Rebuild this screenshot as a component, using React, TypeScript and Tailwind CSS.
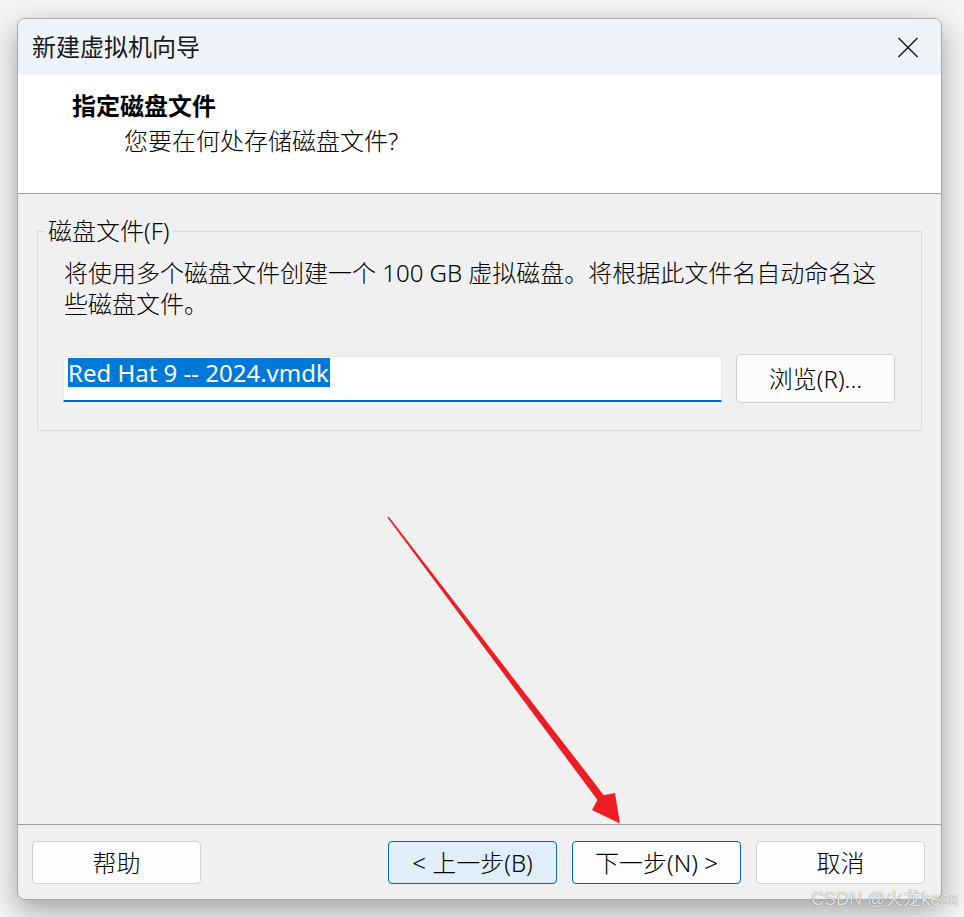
import React from "react";

function CloseIcon() {
  return (
    <svg width="22" height="21" viewBox="0 0 22 21" fill="none">
      <path d="M1.5 1 L20.5 20 M20.5 1 L1.5 20" stroke="#1b1b1b" strokeWidth="1.5" />
    </svg>
  );
}

function Button({ label, variant }: { label: string; variant: "plain" | "hover" | "default" }) {
  const cls =
    variant === "hover"
      ? "bg-[#e0eef9] border-[#0067c0]"
      : variant === "default"
      ? "bg-[#fdfdfd] border-[#0067c0]"
      : "bg-[#fdfdfd] border-[#d0d0d0]";
  return (
    <div
      className={`w-[169px] h-[43px] rounded-[4px] border flex items-center justify-center text-[24px] leading-none font-light text-black ${cls}`}
    >
      {label}
    </div>
  );
}

export default function App() {
  return (
    <div className="relative w-[964px] h-[917px] overflow-hidden bg-[#f4f4f4] pt-[18px] pl-[17px] font-['Noto_Sans','Noto_Sans_CJK_SC',sans-serif] text-black">
      <div className="w-[925px] h-[882px] rounded-[8px] border border-[#a9a9a9] overflow-hidden flex flex-col bg-[#f0f0f0] shadow-[0_10px_28px_rgba(0,0,0,0.35)]">
        {/* Title bar */}
        <div className="h-[56px] shrink-0 bg-[#eef2f9] flex items-center justify-between pl-[14px] pr-[22px]">
          <span className="text-[24px] leading-none text-[#1a1a1a]">新建虚拟机向导</span>
          <CloseIcon />
        </div>
        {/* Header */}
        <div className="h-[119px] shrink-0 bg-white border-b border-[#a0a0a0] pl-[54px] pt-[15px]">
          <div className="text-[24px] leading-[32px] font-semibold">指定磁盘文件</div>
          <div className="text-[24px] leading-[32px] mt-[3px] pl-[52px] font-light">您要在何处存储磁盘文件?</div>
        </div>
        {/* Body */}
        <div className="h-[631px] shrink-0 border-b border-[#a0a0a0] px-[19px] pt-[37px]">
          <div className="relative h-[200px] border border-[#dadada]">
            <div className="absolute left-[7px] top-[-17px] px-[3px] bg-[#f0f0f0] text-[24px] leading-[32px] font-light">
              磁盘文件(F)
            </div>
            <div className="pl-[26px] pt-[25px] text-[24px] leading-[31px] font-light">
              <div>将使用多个磁盘文件创建一个 100 GB 虚拟磁盘。将根据此文件名自动命名这</div>
              <div>些磁盘文件。</div>
            </div>
            <div className="flex items-center pl-[25px] mt-[35px] gap-[14px]">
              <div className="w-[659px] h-[46px] bg-white border border-[#e6e6e6] border-b-2 border-b-[#0067c0] pt-[1px] pl-[4px]">
                <span className="inline-block bg-[#0078d7] text-white text-[24px] leading-[29px] pr-[1px]">
                  Red Hat 9 -- 2024.vmdk
                </span>
              </div>
              <div className="w-[159px] h-[49px] rounded-[4px] border border-[#d0d0d0] bg-[#fcfcfc] flex items-center justify-center text-[24px] leading-none font-light">
                浏览(R)...
              </div>
            </div>
          </div>
        </div>
        {/* Footer */}
        <div className="flex-1 flex items-start justify-between pl-[14px] pr-[16px] pt-[16px]">
          <Button label="帮助" variant="plain" />
          <div className="flex gap-[15px]">
            <Button label="< 上一步(B)" variant="hover" />
            <Button label="下一步(N) >" variant="default" />
            <Button label="取消" variant="plain" />
          </div>
        </div>
      </div>

      {/* Red annotation arrow */}
      <svg className="absolute left-0 top-0 pointer-events-none" width="964" height="917" viewBox="0 0 964 917">
        <polygon
          points="387.4,517.5 597.5,800 592,810 620,823.5 615,793 603.8,795.2 388.6,516.5"
          fill="#ee1c25"
        />
      </svg>

      {/* Watermark */}
      <div className="absolute left-[811px] top-[888px] whitespace-nowrap text-[18px] leading-[22px] text-[rgba(255,255,255,0.85)] [text-shadow:0_0_1px_rgba(0,0,0,0.6)] font-['Liberation_Sans','Noto_Sans_CJK_SC',sans-serif]">
        CSDN @火龙kess
      </div>
    </div>
  );
}
